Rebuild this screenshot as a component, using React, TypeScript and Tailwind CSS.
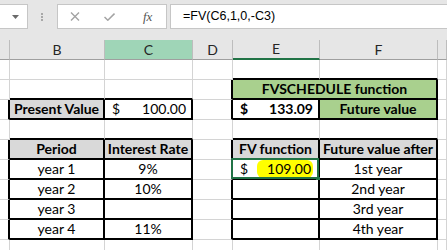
import type { ReactNode } from 'react';

type Spec = {
  t?: string;
  b?: boolean;
  fill?: string;
  money?: [string, string];
  hl?: boolean;
  span?: number;
  sel?: boolean;
};

const GREY = 'bg-[#d9d9d9]';
const GREEN = 'bg-[#a9d08e]';

// row number -> column index (0 = A ... 6 = G)
const rows: Record<number, Record<number, Spec>> = {
  2: { 4: { t: 'FVSCHEDULE function', b: true, fill: GREEN, span: 2 } },
  3: {
    1: { t: 'Present Value', b: true, fill: GREY },
    2: { money: ['$', '100.00'] },
    4: { money: ['$', '133.09'], b: true },
    5: { t: 'Future value', b: true, fill: GREEN },
  },
  5: {
    1: { t: 'Period', b: true, fill: GREY },
    2: { t: 'Interest Rate', b: true, fill: GREY },
    4: { t: 'FV function', b: true, fill: GREY },
    5: { t: 'Future value after', b: true, fill: GREY },
  },
  6: { 1: { t: 'year 1' }, 2: { t: '9%' }, 4: { money: ['$', '109.00'], hl: true, sel: true }, 5: { t: '1st year' } },
  7: { 1: { t: 'year 2' }, 2: { t: '10%' }, 5: { t: '2nd year' } },
  8: { 1: { t: 'year 3' }, 5: { t: '3rd year' } },
  9: { 1: { t: 'year 4' }, 2: { t: '11%' }, 5: { t: '4th year' } },
};

// bordered blocks: [rowFrom, rowTo, colFrom, colTo]
const boxes = [
  [3, 3, 1, 2],
  [2, 3, 4, 5],
  [5, 9, 1, 2],
  [5, 9, 4, 5],
];

const boxed = (r: number, c: number) =>
  boxes.some(([r1, r2, c1, c2]) => r >= r1 && r <= r2 && c >= c1 && c <= c2);

const headers = ['', 'B', 'C', 'D', 'E', 'F', ''];

function Cell({ r, c, spec }: { r: number; c: number; spec?: Spec }) {
  const span = spec?.span ?? 1;
  const right = boxed(r, c) || boxed(r, c + span) ? 'border-r-2 border-r-black' : 'border-r border-r-[#d4d4d4]';
  const bottom = boxed(r, c) || boxed(r + 1, c) ? 'border-b-2 border-b-black' : 'border-b border-b-[#d4d4d4]';

  let content: ReactNode = null;
  if (spec?.money) {
    content = (
      <div className="flex w-full items-center justify-between pl-[7px] pr-[5px]">
        <span>{spec.money[0]}</span>
        <span className={spec.hl ? 'rounded-[6px] bg-[#ffff00] py-[2px] pl-[10px] pr-[2px]' : ''}>{spec.money[1]}</span>
      </div>
    );
  } else if (spec?.t) {
    content = <span className="w-full text-center whitespace-nowrap">{spec.t}</span>;
  }

  return (
    <div
      className={`relative flex items-center ${right} ${bottom} ${spec?.fill ?? 'bg-white'} ${spec?.b ? 'font-bold' : ''} ${span === 2 ? 'col-span-2' : ''}`}
    >
      {content}
      {spec?.sel && (
        <>
          <div className="absolute left-[-2px] top-[-2px] h-[21px] w-[88px] border-2 border-[#217346]" />
          <div className="absolute left-[83px] top-[17px] h-[5px] w-[5px] bg-[#217346]" />
        </>
      )}
    </div>
  );
}

export default function App() {
  const body: ReactNode[] = [];
  for (let r = 1; r <= 10; r++) {
    for (let c = 0; c < 7; c++) {
      const spec = rows[r]?.[c];
      body.push(<Cell key={`${r}-${c}`} r={r} c={c} spec={spec} />);
      if (spec?.span) c += spec.span - 1;
    }
  }

  return (
    <div className="h-[250px] w-[447px] overflow-hidden bg-white font-['Lato',sans-serif] text-[14px] leading-none text-black">
      {/* formula bar */}
      <div className="h-[40px] bg-[#e6e6e6] pt-[4px]">
        <div className="flex h-[25px] items-center">
          <div className="flex h-full w-[28px] items-center justify-end border-y border-r border-[#c6c6c6] bg-white pr-[8px]">
            <svg width="7" height="4" viewBox="0 0 7 4">
              <path d="M0 0H7L3.5 4Z" fill="#6a6a6a" />
            </svg>
          </div>
          <div className="ml-[13px] flex flex-col gap-[1px]">
            <div className="h-[2px] w-[2px] bg-[#a8a8a8]" />
            <div className="h-[2px] w-[2px] bg-[#a8a8a8]" />
            <div className="h-[2px] w-[2px] bg-[#a8a8a8]" />
          </div>
          <div className="ml-[14px] flex h-full w-[110px] items-center border border-[#c6c6c6] bg-white pl-[12px]">
            <svg width="10" height="9" viewBox="0 0 10 9">
              <path d="M1 0.5L9 8.5M9 0.5L1 8.5" stroke="#a3a3a3" strokeWidth="1.4" fill="none" />
            </svg>
            <svg className="ml-[24px]" width="11" height="8" viewBox="0 0 11 8">
              <path d="M0.5 4L3.8 7.2L10.5 0.6" stroke="#a3a3a3" strokeWidth="1.5" fill="none" />
            </svg>
            <span className="ml-[28px] font-['Liberation_Serif',serif] text-[13px] italic text-[#555]">fx</span>
          </div>
          <div className="ml-[3px] flex h-full flex-1 items-center border-y border-l border-[#c6c6c6] bg-white pl-[12px] font-['Liberation_Sans',sans-serif] text-[12.5px]">
            =FV(C6,1,0,-C3)
          </div>
        </div>
      </div>

      {/* column headers */}
      <div className="grid h-[20px] grid-cols-[10px_95px_88px_40px_87px_118px_1fr] text-[14px] text-[#262626]">
        {headers.map((h, i) => (
          <div
            key={i}
            className={`flex items-center justify-center border-r border-r-[#bdbdbd] ${
              i === 4 ? 'border-b-2 border-b-[#217346]' : 'border-b border-b-[#9f9f9f]'
            } ${i === 2 ? 'bg-[#9fd5b7]' : 'bg-[#e6e6e6]'}`}
          >
            {h}
          </div>
        ))}
      </div>

      {/* cells */}
      <div className="grid grid-cols-[10px_95px_88px_40px_87px_118px_1fr] auto-rows-[20px]">{body}</div>
    </div>
  );
}
